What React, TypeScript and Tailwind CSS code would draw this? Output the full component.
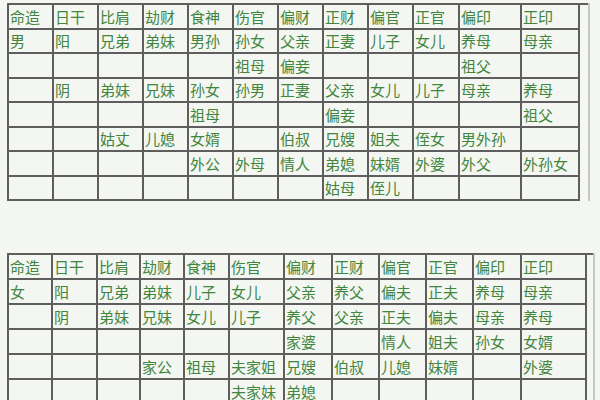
const head = ['命造', '日干', '比肩', '劫财', '食神', '伤官', '偏财', '正财', '偏官', '正官', '偏印', '正印']

const maleRows = [
  head,
  ['男', '阳', '兄弟', '弟妹', '男孙', '孙女', '父亲', '正妻', '儿子', '女儿', '养母', '母亲'],
  ['', '', '', '', '', '祖母', '偏妾', '', '', '', '祖父', ''],
  ['', '阴', '弟妹', '兄妹', '孙女', '孙男', '正妻', '父亲', '女儿', '儿子', '母亲', '养母'],
  ['', '', '', '', '祖母', '', '', '偏妾', '', '', '', '祖父'],
  ['', '', '姑丈', '儿媳', '女婿', '', '伯叔', '兄嫂', '姐夫', '侄女', '男外孙', ''],
  ['', '', '', '', '外公', '外母', '情人', '弟媳', '妹婿', '外婆', '外父', '外孙女'],
  ['', '', '', '', '', '', '', '姑母', '侄儿', '', '', ''],
]

const femaleRows = [
  head,
  ['女', '阳', '兄弟', '弟妹', '儿子', '女儿', '父亲', '养父', '偏夫', '正夫', '养母', '母亲'],
  ['', '阴', '弟妹', '兄妹', '女儿', '儿子', '养父', '父亲', '正夫', '偏夫', '母亲', '养母'],
  ['', '', '', '', '', '', '家婆', '', '情人', '姐夫', '孙女', '女婿'],
  ['', '', '', '家公', '祖母', '夫家姐', '兄嫂', '伯叔', '儿媳', '妹婿', '', '外婆'],
  ['', '', '', '', '', '夫家妹', '弟媳', '', '', '', '', ''],
]

function Table({ rows, cols, frame, rowH }: { rows: string[][]; cols: string; frame: string; rowH: string }) {
  return (
    <div className={`border-r-2 border-[#c4c6c2] ${frame}`}>
      <div className={`grid ${cols} border-l-2 border-t-2 border-[#5e5e5e]`}>
        {rows.flatMap((row, r) =>
          row.map((c, i) => (
            <div
              key={r + '-' + i}
              className={`${rowH} border-r-2 border-b-2 border-[#5e5e5e] pl-[1px] flex items-center whitespace-nowrap text-[15px] leading-none text-[#42853f]`}
            >
              {c}
            </div>
          ))
        )}
      </div>
    </div>
  )
}

export default function App() {
  return (
    <div
      className="w-[600px] h-[400px] overflow-hidden bg-[#f3f6f1] pl-[7px] pt-[3px]"
      style={{ fontFamily: '"Noto Sans CJK SC", "Noto Sans", sans-serif' }}
    >
      <Table
        rows={maleRows}
        cols="grid-cols-[45px_45px_45px_45px_45px_45px_45px_45px_45px_46px_62px_58px]"
        frame="w-[583px]"
        rowH="h-[24.5px]"
      />
      <div className="h-[52px]" />
      <Table
        rows={femaleRows}
        cols="grid-cols-[44px_45px_43px_44px_45px_55px_48px_47px_47px_47px_48px_65px]"
        frame="w-[588px]"
        rowH="h-[25px]"
      />
    </div>
  )
}
